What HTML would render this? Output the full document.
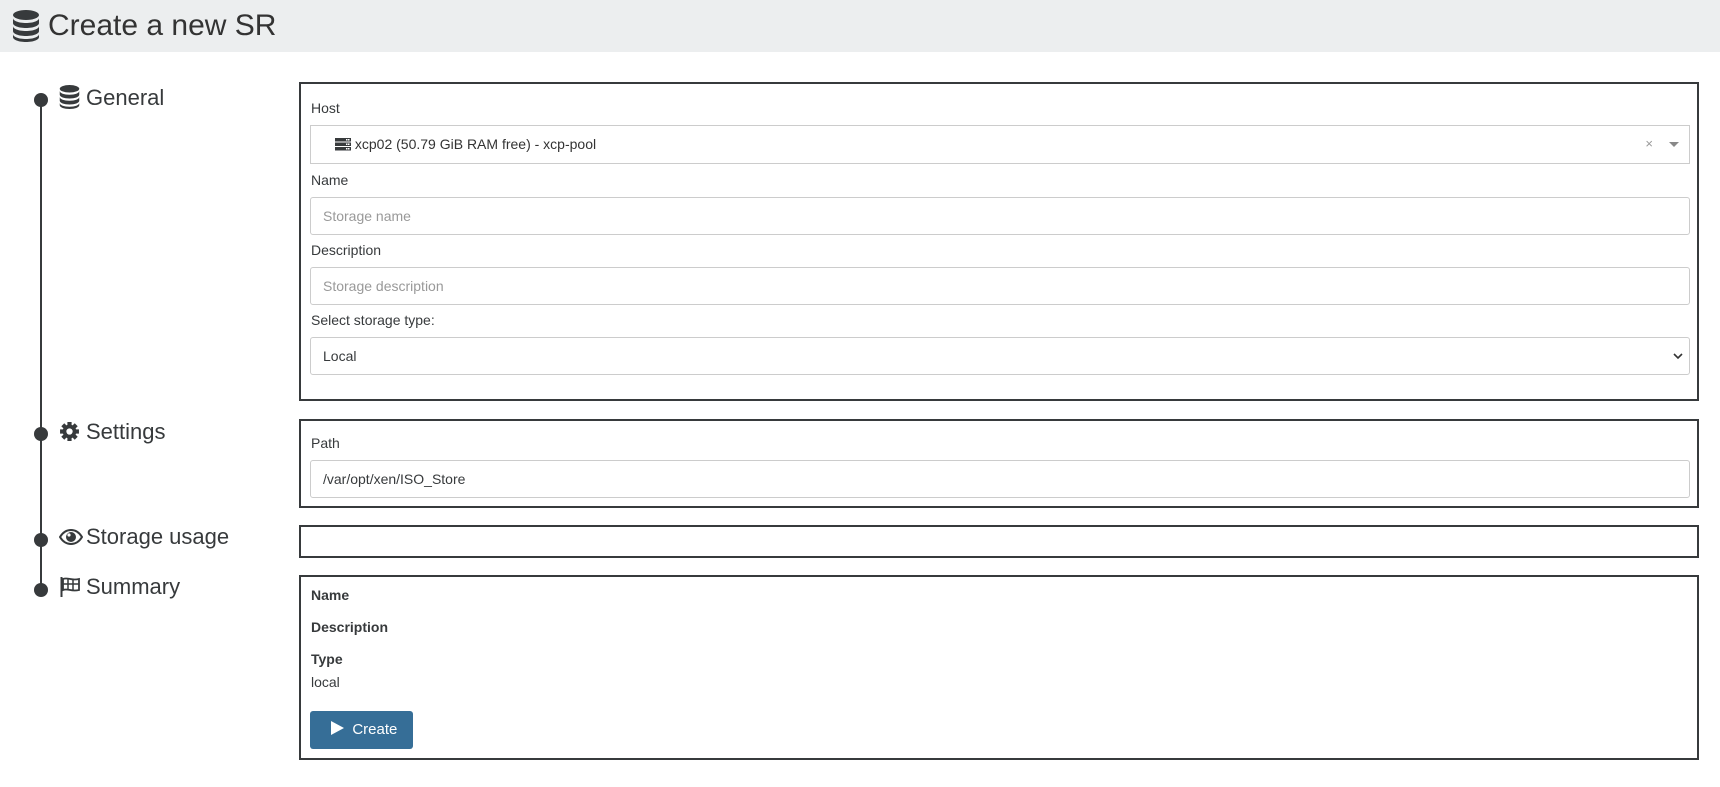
<!DOCTYPE html>
<html><head><style>
*{box-sizing:border-box;margin:0;padding:0}
body{width:1720px;height:787px;background:#fff;font-family:"Liberation Sans",sans-serif;color:#373a3c;position:relative;overflow:hidden;font-size:14px}
.abs{position:absolute}
.hdr{left:0;top:0;width:1720px;height:52px;background:#eceeef}
.title{left:48px;top:6px;font-size:30px;color:#333;line-height:40px}
.line{left:40px;top:100px;width:2px;height:495px;background:#373a3c}
.dot{width:14px;height:14px;border-radius:50%;background:#373a3c;left:34px}
.step{left:86px;font-size:22px;line-height:28px;color:#373a3c}
.box{left:299px;width:1400px;border:2.5px solid #373a3c}
.lbl{font-size:14px;line-height:18px;left:10px}
.inp{left:9px;width:1380px;height:38px;border:1px solid #ccc;border-radius:3px;font-size:14px;line-height:36px;padding-left:12px}
.ph{color:#999}
b{font-weight:bold}
</style></head><body>
<div class="abs hdr"></div>
<svg class="abs" style="left:12px;top:10px" width="28" height="32" viewBox="0 0 28 32"><g fill="#373a3c"><ellipse cx="14" cy="5" rx="13" ry="5"/><path d="M1 8c0 3 6 5 13 5s13-2 13-5v5c0 3-6 5-13 5S1 16 1 13z"/><path d="M1 16c0 3 6 5 13 5s13-2 13-5v5c0 3-6 5-13 5S1 24 1 21z"/><path d="M1 24c0 3 6 5 13 5s13-2 13-5v3c0 3-6 5-13 5S1 30 1 27z"/></g></svg>
<div class="abs title">Create a new SR</div>

<div class="abs line"></div>
<div class="abs dot" style="top:93px"></div>
<div class="abs dot" style="top:427px"></div>
<div class="abs dot" style="top:533px"></div>
<div class="abs dot" style="top:583px"></div>

<svg class="abs" style="left:59px;top:85px" width="21" height="24" viewBox="0 0 28 32"><g fill="#373a3c"><ellipse cx="14" cy="5" rx="13" ry="5"/><path d="M1 8c0 3 6 5 13 5s13-2 13-5v5c0 3-6 5-13 5S1 16 1 13z"/><path d="M1 16c0 3 6 5 13 5s13-2 13-5v5c0 3-6 5-13 5S1 24 1 21z"/><path d="M1 24c0 3 6 5 13 5s13-2 13-5v3c0 3-6 5-13 5S1 30 1 27z"/></g></svg>
<div class="abs step" style="top:84px">General</div>
<svg class="abs" style="left:59px;top:421px" width="21" height="21" viewBox="0 0 20 20"><g fill="#373a3c"><circle cx="10" cy="10" r="6.5"/><g stroke="#373a3c" stroke-width="4"><path d="M10 1v18M1 10h18M3.6 3.6l12.8 12.8M16.4 3.6L3.6 16.4"/></g><circle cx="10" cy="10" r="3" fill="#fff"/></g></svg>
<div class="abs step" style="top:418px">Settings</div>
<svg class="abs" style="left:59px;top:529px" width="24" height="16" viewBox="0 0 24 16"><path d="M1 8C4 3 8 1 12 1s8 2 11 7c-3 5-7 7-11 7S4 13 1 8z" fill="none" stroke="#373a3c" stroke-width="2"/><circle cx="12" cy="8" r="5" fill="#373a3c"/><circle cx="10" cy="6" r="1.6" fill="#fff"/></svg>
<div class="abs step" style="top:523px">Storage usage</div>
<svg class="abs" style="left:60px;top:576px" width="22" height="22" viewBox="0 0 22 22"><path d="M1.5 1v20" stroke="#373a3c" stroke-width="2"/><path d="M3 3c5-2 8 2 16 0v11c-8 2-11-2-16 0z" fill="none" stroke="#373a3c" stroke-width="1.8"/><path d="M3 8l16 0M8 3l0 11M13 4l0 11" stroke="#373a3c" stroke-width="1.5"/></svg>
<div class="abs step" style="top:573px">Summary</div>

<div class="abs box" style="top:82px;height:319px">
 <div class="abs lbl" style="top:15px">Host</div>
 <div class="abs inp" style="top:41px;height:39px;border-radius:0;padding-left:24px;color:#333">
  <svg style="vertical-align:-2px" width="16" height="13" viewBox="0 0 16 13"><g fill="#373a3c"><rect y="0" width="16" height="3.5"/><rect y="4.5" width="16" height="3.5"/><rect y="9" width="16" height="3.5"/></g><g fill="#fff"><rect x="11" y="1" width="1.5" height="1.5"/><rect x="13" y="1" width="1.5" height="1.5"/><rect x="11" y="5.5" width="1.5" height="1.5"/><rect x="13" y="5.5" width="1.5" height="1.5"/><rect x="11" y="10" width="1.5" height="1.5"/><rect x="13" y="10" width="1.5" height="1.5"/></g></svg> xcp02 (50.79 GiB RAM free) - xcp-pool
  <span class="abs" style="right:36px;top:0;color:#999;font-size:13px">×</span>
  <span class="abs" style="right:10px;top:16px;width:0;height:0;border-left:5px solid transparent;border-right:5px solid transparent;border-top:5px solid #888"></span>
 </div>
 <div class="abs lbl" style="top:87px">Name</div>
 <div class="abs inp ph" style="top:113px">Storage name</div>
 <div class="abs lbl" style="top:157px">Description</div>
 <div class="abs inp ph" style="top:183px">Storage description</div>
 <div class="abs lbl" style="top:227px">Select storage type:</div>
 <div class="abs inp" style="top:253px">Local
  <svg class="abs" style="right:6px;top:15px" width="10" height="7" viewBox="0 0 10 7"><path d="M1 1l4 4 4-4" fill="none" stroke="#333" stroke-width="1.6"/></svg></div>
</div>

<div class="abs box" style="top:419px;height:89px">
 <div class="abs lbl" style="top:13px">Path</div>
 <div class="abs inp" style="top:39px">/var/opt/xen/ISO_Store</div>
</div>

<div class="abs box" style="top:525px;height:33px"></div>

<div class="abs box" style="top:575px;height:185px">
 <div class="abs lbl" style="top:9px"><b>Name</b></div>
 <div class="abs lbl" style="top:41px"><b>Description</b></div>
 <div class="abs lbl" style="top:73px"><b>Type</b></div>
 <div class="abs lbl" style="top:96px">local</div>
 <div class="abs" style="left:9px;top:134px;width:103px;height:38px;background:#366e97;border-radius:3px;color:#fff;font-size:15px;line-height:38px;padding-left:21px">
  <svg style="vertical-align:-1px" width="13" height="14" viewBox="0 0 13 14"><path d="M0 0l13 7-13 7z" fill="#fff"/></svg>&nbsp; Create</div>
</div>
</body></html>
